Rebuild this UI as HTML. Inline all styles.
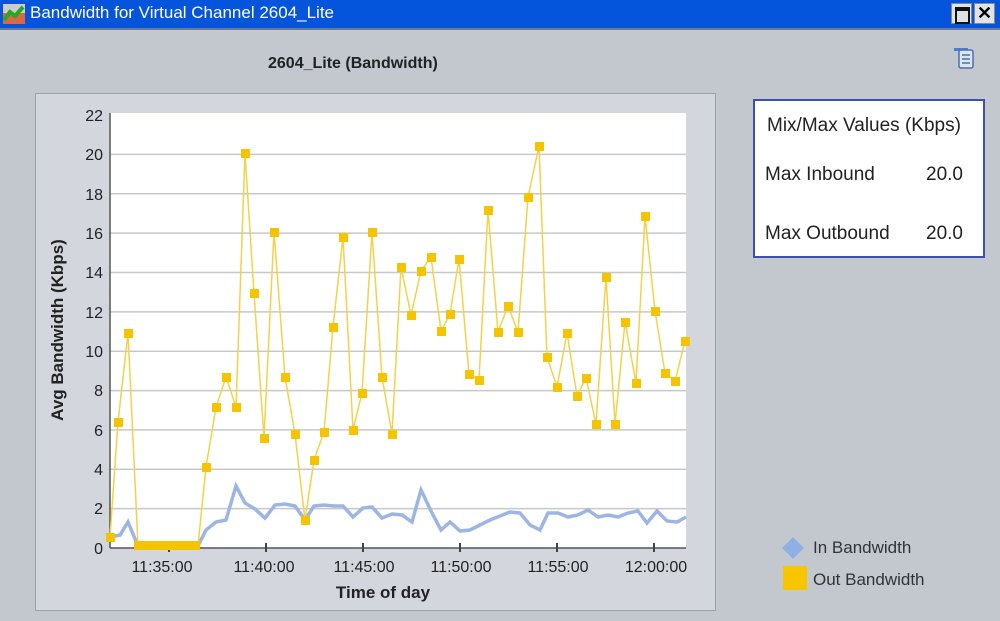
<!DOCTYPE html>
<html><head><style>
body{margin:0;width:1000px;height:621px;overflow:hidden;background:#c3c8cf;font-family:"Liberation Sans",sans-serif;position:relative}
.tb{position:absolute;left:0;top:0;width:1000px;height:28px;background:#0455dc;border-bottom:2px solid #6a7a95}
.tb span{position:absolute;left:30px;top:3px;color:#fff;font-size:17px}
.btn{position:absolute;top:3px;width:21px;height:21px;background:#dfe3e8;border:1px solid #888;box-sizing:border-box}
.panel{position:absolute;left:35px;top:93px;width:681px;height:518px;background:#d3d7dd;border:1px solid #9aa0a8;box-sizing:border-box}
.mm{position:absolute;left:753px;top:99px;width:232px;height:159px;background:#fff;border:2px solid #3a4fb0;box-sizing:border-box;font-size:19px;color:#222}
.mm div{position:absolute}
.leg{position:absolute;font-size:17px;color:#333}
</style></head><body>
<div class="tb"><svg style="position:absolute;left:3px;top:4px" width="22" height="20"><rect width="22" height="20" fill="#d64"/><rect width="22" height="9" fill="#ccc"/><path d="M1 16 L7 8 L12 12 L20 3" stroke="#2a2" stroke-width="4" fill="none"/></svg><span>Bandwidth for Virtual Channel 2604_Lite</span>
<div class="btn" style="left:951px"><div style="position:absolute;left:3px;top:3px;width:11px;height:11px;border:2px solid #111;border-top-width:4px"></div></div>
<div class="btn" style="left:974px;font-weight:bold;font-size:18px;text-align:center;line-height:19px">✕</div></div>
<div style="position:absolute;left:268px;top:55px;font-size:16px;font-weight:bold;color:#222">2604_Lite (Bandwidth)</div>
<svg style="position:absolute;left:953px;top:47px" width="24" height="24"><rect x="1" y="1" width="14" height="3" fill="#4a7fd0"/><rect x="6" y="3" width="14" height="18" rx="2" fill="#dce6f5" stroke="#4a70b0" stroke-width="1.5"/><path d="M9 8h8M9 12h8M9 16h8" stroke="#4a70b0" stroke-width="1.5"/></svg>
<div class="panel"></div>
<svg style="position:absolute;left:0;top:0" width="1000" height="621">
<rect x="110" y="113" width="576" height="435" fill="#fff"/>
<g stroke="#c8c8c8" stroke-width="1.5">
<line x1="110" x2="686" y1="508.6" y2="508.6"/><line x1="110" x2="686" y1="469.3" y2="469.3"/><line x1="110" x2="686" y1="429.9" y2="429.9"/><line x1="110" x2="686" y1="390.6" y2="390.6"/><line x1="110" x2="686" y1="351.2" y2="351.2"/><line x1="110" x2="686" y1="311.9" y2="311.9"/><line x1="110" x2="686" y1="272.5" y2="272.5"/><line x1="110" x2="686" y1="233.1" y2="233.1"/><line x1="110" x2="686" y1="193.8" y2="193.8"/><line x1="110" x2="686" y1="154.4" y2="154.4"/></g>
<line x1="110" y1="113" x2="110" y2="548" stroke="#555" stroke-width="1.5"/>
<line x1="110" y1="548" x2="686" y2="548" stroke="#555" stroke-width="1.5"/>
<g stroke="#444" stroke-width="2"><line x1="169" x2="169" y1="543" y2="552"/><line x1="266" x2="266" y1="543" y2="552"/><line x1="363" x2="363" y1="543" y2="552"/><line x1="460" x2="460" y1="543" y2="552"/><line x1="557" x2="557" y1="543" y2="552"/><line x1="654" x2="654" y1="543" y2="552"/></g>
<g font-size="16" fill="#222" text-anchor="end">
<text x="103" y="554">0</text><text x="103" y="514">2</text><text x="103" y="475">4</text><text x="103" y="436">6</text><text x="103" y="396">8</text><text x="103" y="357">10</text><text x="103" y="318">12</text><text x="103" y="278">14</text><text x="103" y="239">16</text><text x="103" y="200">18</text><text x="103" y="160">20</text><text x="103" y="121">22</text></g>
<g font-size="16" fill="#222" text-anchor="middle">
<text x="162" y="572">11:35:00</text><text x="264" y="572">11:40:00</text><text x="364" y="572">11:45:00</text><text x="461" y="572">11:50:00</text><text x="558" y="572">11:55:00</text><text x="656" y="572">12:00:00</text></g>
<text x="383" y="598" font-size="17" font-weight="bold" text-anchor="middle" fill="#222">Time of day</text>
<text transform="translate(63,330) rotate(-90)" font-size="17" font-weight="bold" text-anchor="middle" fill="#222">Avg Bandwidth (Kbps)</text>
<polyline fill="none" stroke="#9db5e2" stroke-width="3.5" points="110,537 120,535 128,522 138,546 198,546 206,530 216,522 226,520 236,486 245,503 255,509 265,518 275,505 285,504 295,506 305,520 314,506 324,505 334,506 343,506 353,517 363,508 372,507 382,518 392,514 402,515 412,522 421,490 432,513 441,530 450,522 460,531 470,530 480,525 490,520 500,516 510,512 520,513 530,525 540,530 548,513 558,513 568,517 578,515 588,510 598,517 608,515 618,517 628,513 638,511 647,523 657,511 667,521 677,522 686,517"/>
<polyline fill="none" stroke="#f2d24a" stroke-width="1.5" points="110,537 118,422 128,333 138,546 198,546 206,467 216,407 226,377 236,407 245,153 254,293 264,438 274,232 285,377 295,434 305,520 314,460 324,432 333,327 343,237 353,430 362,393 372,232 382,377 392,434 401,267 411,315 421,271 431,257 441,331 450,314 459,259 469,374 479,380 488,210 498,332 508,306 518,332 528,197 539,146 547,357 557,387 567,333 577,396 586,378 596,424 606,277 615,424 625,322 636,383 645,216 655,311 665,373 675,381 685,341"/>
<g fill="#f5c400">
<rect x="106" y="533" width="9" height="9"/><rect x="114" y="418" width="9" height="9"/><rect x="124" y="329" width="9" height="9"/><rect x="134" y="541" width="66" height="9"/><rect x="202" y="463" width="9" height="9"/><rect x="212" y="403" width="9" height="9"/><rect x="222" y="373" width="9" height="9"/><rect x="232" y="403" width="9" height="9"/><rect x="241" y="149" width="9" height="9"/><rect x="250" y="289" width="9" height="9"/><rect x="260" y="434" width="9" height="9"/><rect x="270" y="228" width="9" height="9"/><rect x="281" y="373" width="9" height="9"/><rect x="291" y="430" width="9" height="9"/><rect x="301" y="516" width="9" height="9"/><rect x="310" y="456" width="9" height="9"/><rect x="320" y="428" width="9" height="9"/><rect x="329" y="323" width="9" height="9"/><rect x="339" y="233" width="9" height="9"/><rect x="349" y="426" width="9" height="9"/><rect x="358" y="389" width="9" height="9"/><rect x="368" y="228" width="9" height="9"/><rect x="378" y="373" width="9" height="9"/><rect x="388" y="430" width="9" height="9"/><rect x="397" y="263" width="9" height="9"/><rect x="407" y="311" width="9" height="9"/><rect x="417" y="267" width="9" height="9"/><rect x="427" y="253" width="9" height="9"/><rect x="437" y="327" width="9" height="9"/><rect x="446" y="310" width="9" height="9"/><rect x="455" y="255" width="9" height="9"/><rect x="465" y="370" width="9" height="9"/><rect x="475" y="376" width="9" height="9"/><rect x="484" y="206" width="9" height="9"/><rect x="494" y="328" width="9" height="9"/><rect x="504" y="302" width="9" height="9"/><rect x="514" y="328" width="9" height="9"/><rect x="524" y="193" width="9" height="9"/><rect x="535" y="142" width="9" height="9"/><rect x="543" y="353" width="9" height="9"/><rect x="553" y="383" width="9" height="9"/><rect x="563" y="329" width="9" height="9"/><rect x="573" y="392" width="9" height="9"/><rect x="582" y="374" width="9" height="9"/><rect x="592" y="420" width="9" height="9"/><rect x="602" y="273" width="9" height="9"/><rect x="611" y="420" width="9" height="9"/><rect x="621" y="318" width="9" height="9"/><rect x="632" y="379" width="9" height="9"/><rect x="641" y="212" width="9" height="9"/><rect x="651" y="307" width="9" height="9"/><rect x="661" y="369" width="9" height="9"/><rect x="671" y="377" width="9" height="9"/><rect x="681" y="337" width="9" height="9"/></g>
</svg>
<div class="mm"><div style="left:12px;top:14px">Mix/Max Values (Kbps)</div><div style="left:10px;top:63px">Max Inbound</div><div style="left:171px;top:63px">20.0</div><div style="left:10px;top:122px">Max Outbound</div><div style="left:171px;top:122px">20.0</div></div>
<svg style="position:absolute;left:781px;top:536px" width="24" height="24"><path d="M12 1 L23 12 L12 23 L1 12Z" fill="#8fb0e4"/></svg>
<div style="position:absolute;left:783px;top:566px;width:24px;height:24px;background:#f7c600"></div>
<div class="leg" style="left:813px;top:538px">In Bandwidth</div>
<div class="leg" style="left:813px;top:570px">Out Bandwidth</div>
</body></html>
